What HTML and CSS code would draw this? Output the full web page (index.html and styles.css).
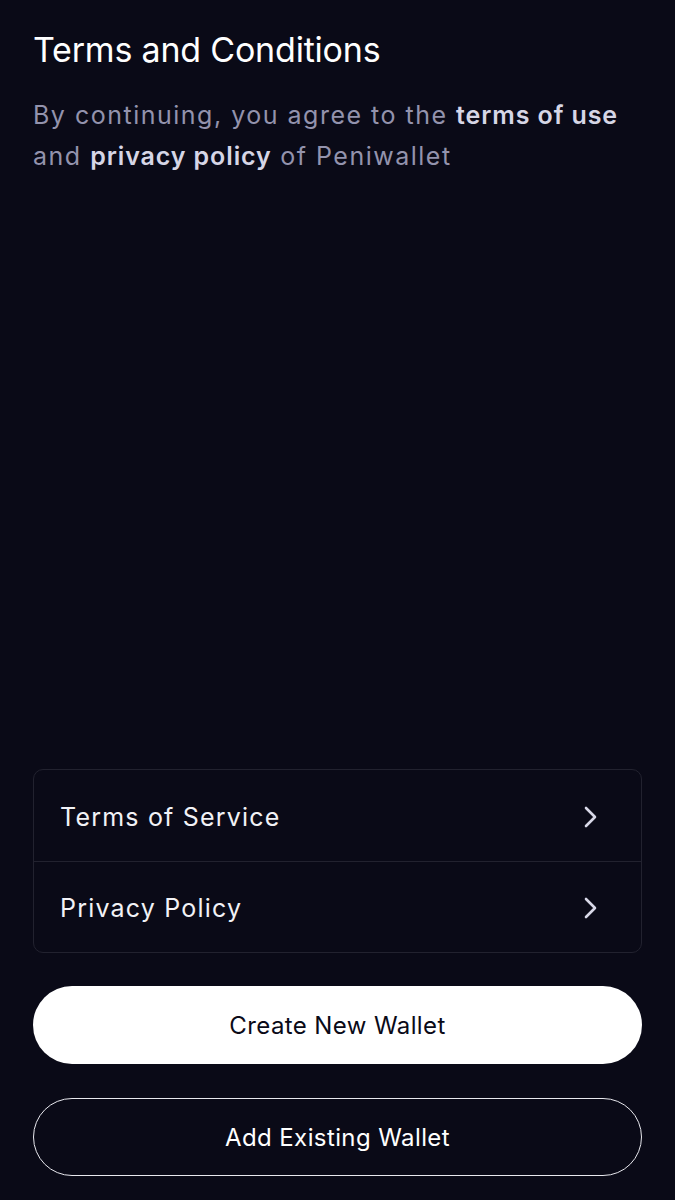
FILE: index.html
```html
<!DOCTYPE html>
<html lang="en">
<head>
  <meta charset="UTF-8" />
  <meta name="viewport" content="width=device-width, initial-scale=1.0"/>
  <title>Terms and Conditions | Peniwallet</title>
  <link rel="stylesheet" href="styles.css">
</head>
<body>

  <div class="page">
    <div class="intro">
      <h1>Terms and Conditions</h1>
      <p>By continuing, you agree to the <b>terms of use</b> and <b>privacy policy</b> of Peniwallet</p>
    </div>

    <div class="links">
      <a class="link-row" href="#">
        <span>Terms of Service</span>
        <svg class="chevron" width="16" height="24" viewBox="0 0 16 24"><path d="M3 3 L12 12 L3 21" /></svg>
      </a>
      <a class="link-row" href="#">
        <span>Privacy Policy</span>
        <svg class="chevron" width="16" height="24" viewBox="0 0 16 24"><path d="M3 3 L12 12 L3 21" /></svg>
      </a>
    </div>

    <div class="actions">
      <button class="btn btn-primary">Create New Wallet</button>
      <button class="btn btn-outline">Add Existing Wallet</button>
    </div>
  </div>

</body>
</html>
```

FILE: styles.css
```css
body {
  margin: 0;
  background: #0a0a17;
  font-family: Inter, "Liberation Sans", Arial, sans-serif;
  color: white;
}

.page {
  height: 1200px;
  box-sizing: border-box;
  padding: 28px 33px 24px 33px;
  display: flex;
  flex-direction: column;
}

.intro h1 {
  margin: 0;
  font-size: 34px;
  font-weight: 400;
  letter-spacing: -0.2px;
  line-height: 44px;
}

.intro p {
  margin: 23px 0 0;
  font-size: 25px;
  line-height: 41px;
  letter-spacing: 1.5px;
  color: #9393ad;
}

.intro b {
  color: #d6d6e6;
  font-weight: 600;
  letter-spacing: 0.9px;
}

.links {
  margin-top: auto;
  border: 1.5px solid #22222f;
  border-radius: 10px;
}

.link-row {
  box-sizing: border-box;
  display: flex;
  align-items: center;
  justify-content: space-between;
  height: 91px;
  padding: 2px 42px 0 26px;
  color: #f2f2f6;
  text-decoration: none;
  font-size: 25px;
  font-weight: 400;
  letter-spacing: 1.2px;
}

.link-row + .link-row {
  border-top: 1.5px solid #22222f;
}

.chevron path {
  fill: none;
  stroke: #d8d8e8;
  stroke-width: 2.6;
  stroke-linecap: round;
  stroke-linejoin: round;
}

.actions {
  display: flex;
  flex-direction: column;
  gap: 34px;
  margin-top: 33px;
}

.btn {
  height: 78px;
  border-radius: 39px;
  padding-top: 2px;
  font-family: inherit;
  font-size: 24px;
  font-weight: 400;
  letter-spacing: 0.4px;
  cursor: pointer;
}

.btn-primary {
  background: white;
  color: #0a0a17;
  border: none;
}

.btn-outline {
  background: transparent;
  color: white;
  border: 1.5px solid #e8e8ee;
}
```
